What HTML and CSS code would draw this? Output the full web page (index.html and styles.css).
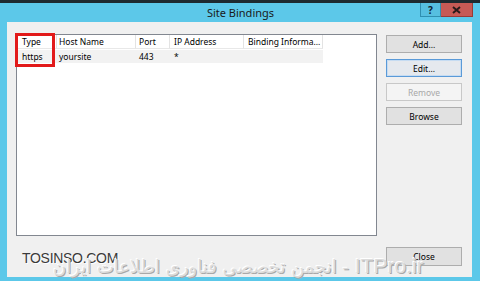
FILE: index.html
```html
<!DOCTYPE html>
<html>
<head>
<meta charset="utf-8">
<link rel="stylesheet" href="styles.css">
</head>
<body>
<div class="screen">
  <div class="topstrip"></div>
  <div class="window">
    <div class="titlebar">
      <div class="title">Site Bindings</div>
      <div class="tbtns">
        <div class="tb help">?</div>
        <div class="tb close">
          <svg width="9" height="8" viewBox="0 0 9 8"><path d="M1 1 L8 7 M8 1 L1 7" stroke="#2a1a1a" stroke-width="2"/></svg>
        </div>
      </div>
    </div>
    <div class="client">
      <div class="main">
        <div class="list">
          <div class="row head">
            <div class="c c1">Type</div>
            <div class="c c2">Host Name</div>
            <div class="c c3">Port</div>
            <div class="c c4">IP Address</div>
            <div class="c c5">Binding Informa...</div>
          </div>
          <div class="row data">
            <div class="c c1">https</div>
            <div class="c c2">yoursite</div>
            <div class="c c3">443</div>
            <div class="c c4">*</div>
            <div class="c c5"></div>
          </div>
          <div class="highlight"></div>
        </div>
        <div class="buttons">
          <div class="btn">Add...</div>
          <div class="btn focus">Edit...</div>
          <div class="btn disabled">Remove</div>
          <div class="btn">Browse</div>
        </div>
      </div>
      <div class="footer">
        <div class="btn">Close</div>
      </div>
    </div>
  </div>
  <div class="wm-site">TOSINSO.COM</div>
  <div class="wm-fa">انجمن تخصصی فناوری اطلاعات ایران - <span class="wm-lat">ITPro.ir</span></div>
</div>
</body>
</html>
```
FILE: styles.css
```css
html, body {
  margin: 0;
  padding: 0;
  background: #1e2a30;
}
.screen {
  position: relative;
  width: 480px;
  height: 281px;
  overflow: hidden;
  font-family: "Noto Sans", "Open Sans", sans-serif;
}
.topstrip {
  height: 3px;
  background: #1e2a30;
}
.window {
  height: 278px;
  background: #5cc8e9;
  display: flex;
  flex-direction: column;
  padding: 0 8px 4px 7px;
  box-sizing: border-box;
}
.titlebar {
  height: 19px;
  position: relative;
  display: flex;
  align-items: center;
  justify-content: center;
}
.title {
  font-size: 11px;
  color: #1a1a1a;
  margin-left: 2px;
}
.tbtns {
  position: absolute;
  top: 0;
  right: -1px;
  display: flex;
}
.tb {
  height: 14px;
  display: flex;
  align-items: center;
  justify-content: center;
  box-sizing: border-box;
}
.help {
  width: 21px;
  background: #56bfe0;
  border: 1px solid #2f8fb0;
  border-top: none;
  font-size: 10px;
  font-weight: bold;
  color: #123;
}
.close {
  width: 32px;
  background: #c75a55;
  border: 1px solid #9a3a36;
  border-top: none;
  border-left: none;
}
.client {
  flex: 1;
  background: #f0f0f0;
  padding: 12px 10px 0 9px;
  display: flex;
  flex-direction: column;
}
.main {
  display: flex;
  gap: 9px;
}
.list {
  position: relative;
  width: 361px;
  height: 202px;
  box-sizing: border-box;
  background: #fff;
  border: 1px solid #828790;
  font-size: 8.5px;
  color: #000;
}
.row {
  display: flex;
  width: 306px;
}
.head {
  height: 14px;
}
.head .c {
  border-right: 1px solid #e3e3e3;
  border-bottom: 1px solid #e8e8e8;
}
.data {
  height: 13px;
  margin-top: 1px;
  background: #f2f2f2;
}
.c {
  box-sizing: border-box;
  display: flex;
  align-items: center;
  padding-left: 4px;
  white-space: nowrap;
}
.c1 { width: 40px; padding-left: 5px; }
.c2 { width: 79px; padding-left: 2px; }
.c3 { width: 34px; padding-left: 3px; }
.c4 { width: 74px; }
.c5 { width: 79px; }
.highlight {
  position: absolute;
  left: -2px;
  top: -2px;
  width: 40px;
  height: 34px;
  box-sizing: border-box;
  border: 3px solid #e21a1a;
}
.buttons {
  display: flex;
  flex-direction: column;
  gap: 6px;
  margin-top: 1px;
}
.btn {
  width: 76px;
  height: 18px;
  box-sizing: border-box;
  background: #e1e1e1;
  border: 1px solid #adadad;
  display: flex;
  align-items: center;
  justify-content: center;
  font-size: 8.5px;
  color: #000;
}
.btn.focus {
  border: 1px solid #5a9ad8;
  box-shadow: inset 0 0 0 1px #c6dcf2;
  background: #e5e9ee;
}
.btn.disabled {
  background: #f4f4f4;
  border-color: #c8c8c8;
  color: #a8a8a8;
}
.footer {
  display: flex;
  justify-content: flex-end;
  margin-top: 11px;
}
.footer .btn {
  height: 19px;
}
.wm-site {
  position: absolute;
  left: 22px;
  top: 250px;
  font-family: "Liberation Sans", Arial, sans-serif;
  font-size: 14px;
  letter-spacing: -0.3px;
  color: #3a3a3a;
  text-shadow: 1px 1px 0 #ffffff;
}
.wm-fa {
  position: absolute;
  left: 53px;
  top: 254px;
  font-family: "DejaVu Sans", sans-serif;
  font-size: 18px;
  white-space: nowrap;
  direction: ltr;
  color: #dcdcdc;
  text-shadow: -1px -1px 0 #ffffff, 1px 1px 0 #a8a8a8;
}
.wm-lat {
  font-family: "Liberation Sans", Arial, sans-serif;
  font-size: 21px;
}
```
